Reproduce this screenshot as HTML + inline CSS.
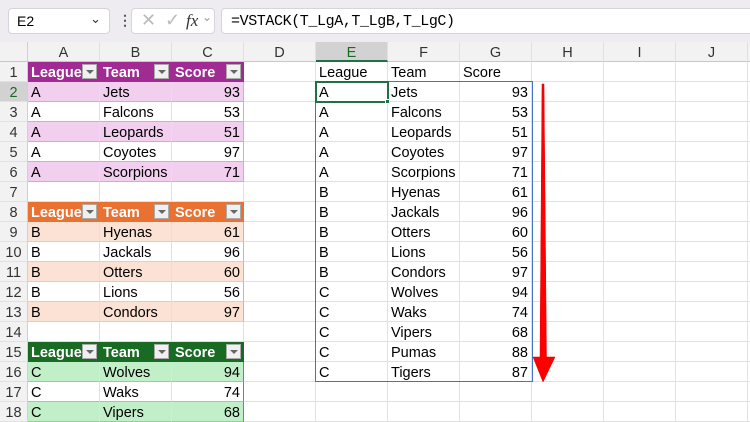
<!DOCTYPE html>
<html><head><style>
*{box-sizing:border-box;margin:0;padding:0}
body{width:750px;height:413px;overflow:hidden;background:#fff;font-family:"Liberation Sans",Arial,sans-serif;font-size:14.5px;color:#000;position:relative}
.top{position:absolute;left:0;top:0;width:750px;height:42px;background:#eeebf1}
.box{position:absolute;background:#fff;border:1px solid #d6d3da;border-radius:4px;top:8px;height:26px}
.r{display:flex;height:20px}
.c{width:72px;height:20px;border-right:1px solid #e1e1e1;border-bottom:1px solid #e1e1e1;padding-left:3px;padding-top:2px;line-height:19px;white-space:nowrap;overflow:hidden;position:relative;flex:none}
.h{width:28px;background:#f2f2f2;color:#333;text-align:center;border-right:1px solid #d0d0d0;padding-left:0}
.n{text-align:right;padding-right:3px}
.ch{background:#f2f2f2;text-align:center;color:#333;padding-left:0;border-bottom:1px solid #c8c8c8}
.pH{background:#a02b93;color:#fff;font-weight:bold;border-bottom-color:#a02b93;border-right-color:#a02b93}
.oH{background:#e97132;color:#fff;font-weight:bold;border-bottom-color:#e97132;border-right-color:#e97132}
.gH{background:#196b24;color:#fff;font-weight:bold;border-bottom-color:#196b24;border-right-color:#196b24}
.p{border-bottom-color:#e59edd}.p1{background:#f2ceef}
.o{border-bottom-color:#f7c7ac}.o1{background:#fbe2d5}
.g{border-bottom-color:#8ed973}.g1{background:#c1f0c8}
.pr{border-right-color:#e59edd}.or{border-right-color:#f1a983}.gr{border-right-color:#4ea72e}
.dd{position:absolute;right:2px;top:2px;width:15px;height:15px;background:#f0f0f0;border:1px solid #aaa}
.dd:after{content:"";position:absolute;left:3px;top:5px;border-left:4px solid transparent;border-right:4px solid transparent;border-top:4px solid #666}
</style></head><body>
<div class="top">
<div class="box" style="left:8px;width:102px"><span style="position:absolute;left:8px;top:4px;font-size:14px">E2</span><span style="position:absolute;right:8px;top:2px;font-size:13px;color:#333">&#8964;</span></div>
<div style="position:absolute;left:118px;top:12px;color:#555;font-size:14px;font-weight:bold">&#8942;</div>
<div class="box" style="left:131px;width:84px"><span style="position:absolute;left:9px;top:1px;color:#bbb;font-size:18px">&#10005;</span><span style="position:absolute;left:33px;top:1px;color:#bbb;font-size:18px">&#10003;</span><span style="position:absolute;left:54px;top:2px;font-family:'Liberation Serif',serif;font-style:italic;font-size:17px;color:#333">fx</span><span style="position:absolute;left:70px;top:1px;font-size:12px;color:#999">&#8964;</span></div>
<div class="box" style="left:221px;width:540px"><span style="position:absolute;left:9px;top:4px;font-family:'Liberation Mono',monospace;font-size:15px;letter-spacing:-0.4px">=VSTACK(T_LgA,T_LgB,T_LgC)</span></div>
</div>
<div style="position:absolute;left:0;top:42px;width:800px">
<div class="r"><div class="c h" style="border-bottom:1px solid #c8c8c8"></div><div class="c ch">A</div><div class="c ch">B</div><div class="c ch">C</div><div class="c ch">D</div><div class="c ch" style="background:#d2d2d2;color:#196b24;border-bottom:2px solid #1e7145">E</div><div class="c ch">F</div><div class="c ch">G</div><div class="c ch">H</div><div class="c ch">I</div><div class="c ch">J</div><div class="c ch"></div></div>
<div class="r"><div class="c h">1</div><div class="c pH">League<i class="dd"></i></div><div class="c pH">Team<i class="dd"></i></div><div class="c pH">Score<i class="dd"></i></div><div class="c"></div><div class="c">League</div><div class="c">Team</div><div class="c">Score</div><div class="c"></div><div class="c"></div><div class="c"></div><div class="c"></div></div>
<div class="r"><div class="c h" style="color:#196b24;background:#d2d2d2">2</div><div class="c p p1">A</div><div class="c p p1">Jets</div><div class="c p p1 n pr">93</div><div class="c"></div><div class="c">A</div><div class="c">Jets</div><div class="c n">93</div><div class="c"></div><div class="c"></div><div class="c"></div><div class="c"></div></div>
<div class="r"><div class="c h">3</div><div class="c p">A</div><div class="c p">Falcons</div><div class="c p n pr">53</div><div class="c"></div><div class="c">A</div><div class="c">Falcons</div><div class="c n">53</div><div class="c"></div><div class="c"></div><div class="c"></div><div class="c"></div></div>
<div class="r"><div class="c h">4</div><div class="c p p1">A</div><div class="c p p1">Leopards</div><div class="c p p1 n pr">51</div><div class="c"></div><div class="c">A</div><div class="c">Leopards</div><div class="c n">51</div><div class="c"></div><div class="c"></div><div class="c"></div><div class="c"></div></div>
<div class="r"><div class="c h">5</div><div class="c p">A</div><div class="c p">Coyotes</div><div class="c p n pr">97</div><div class="c"></div><div class="c">A</div><div class="c">Coyotes</div><div class="c n">97</div><div class="c"></div><div class="c"></div><div class="c"></div><div class="c"></div></div>
<div class="r"><div class="c h">6</div><div class="c p p1">A</div><div class="c p p1">Scorpions</div><div class="c p p1 n pr">71</div><div class="c"></div><div class="c">A</div><div class="c">Scorpions</div><div class="c n">71</div><div class="c"></div><div class="c"></div><div class="c"></div><div class="c"></div></div>
<div class="r"><div class="c h">7</div><div class="c"></div><div class="c"></div><div class="c"></div><div class="c"></div><div class="c">B</div><div class="c">Hyenas</div><div class="c n">61</div><div class="c"></div><div class="c"></div><div class="c"></div><div class="c"></div></div>
<div class="r"><div class="c h">8</div><div class="c oH">League<i class="dd"></i></div><div class="c oH">Team<i class="dd"></i></div><div class="c oH">Score<i class="dd"></i></div><div class="c"></div><div class="c">B</div><div class="c">Jackals</div><div class="c n">96</div><div class="c"></div><div class="c"></div><div class="c"></div><div class="c"></div></div>
<div class="r"><div class="c h">9</div><div class="c o o1">B</div><div class="c o o1">Hyenas</div><div class="c o o1 n or">61</div><div class="c"></div><div class="c">B</div><div class="c">Otters</div><div class="c n">60</div><div class="c"></div><div class="c"></div><div class="c"></div><div class="c"></div></div>
<div class="r"><div class="c h">10</div><div class="c o">B</div><div class="c o">Jackals</div><div class="c o n or">96</div><div class="c"></div><div class="c">B</div><div class="c">Lions</div><div class="c n">56</div><div class="c"></div><div class="c"></div><div class="c"></div><div class="c"></div></div>
<div class="r"><div class="c h">11</div><div class="c o o1">B</div><div class="c o o1">Otters</div><div class="c o o1 n or">60</div><div class="c"></div><div class="c">B</div><div class="c">Condors</div><div class="c n">97</div><div class="c"></div><div class="c"></div><div class="c"></div><div class="c"></div></div>
<div class="r"><div class="c h">12</div><div class="c o">B</div><div class="c o">Lions</div><div class="c o n or">56</div><div class="c"></div><div class="c">C</div><div class="c">Wolves</div><div class="c n">94</div><div class="c"></div><div class="c"></div><div class="c"></div><div class="c"></div></div>
<div class="r"><div class="c h">13</div><div class="c o o1">B</div><div class="c o o1">Condors</div><div class="c o o1 n or">97</div><div class="c"></div><div class="c">C</div><div class="c">Waks</div><div class="c n">74</div><div class="c"></div><div class="c"></div><div class="c"></div><div class="c"></div></div>
<div class="r"><div class="c h">14</div><div class="c"></div><div class="c"></div><div class="c"></div><div class="c"></div><div class="c">C</div><div class="c">Vipers</div><div class="c n">68</div><div class="c"></div><div class="c"></div><div class="c"></div><div class="c"></div></div>
<div class="r"><div class="c h">15</div><div class="c gH">League<i class="dd"></i></div><div class="c gH">Team<i class="dd"></i></div><div class="c gH">Score<i class="dd"></i></div><div class="c"></div><div class="c">C</div><div class="c">Pumas</div><div class="c n">88</div><div class="c"></div><div class="c"></div><div class="c"></div><div class="c"></div></div>
<div class="r"><div class="c h">16</div><div class="c g g1">C</div><div class="c g g1">Wolves</div><div class="c g g1 n gr">94</div><div class="c"></div><div class="c">C</div><div class="c">Tigers</div><div class="c n">87</div><div class="c"></div><div class="c"></div><div class="c"></div><div class="c"></div></div>
<div class="r"><div class="c h">17</div><div class="c g">C</div><div class="c g">Waks</div><div class="c g n gr">74</div><div class="c"></div><div class="c"></div><div class="c"></div><div class="c"></div><div class="c"></div><div class="c"></div><div class="c"></div><div class="c"></div></div>
<div class="r"><div class="c h">18</div><div class="c g g1">C</div><div class="c g g1">Vipers</div><div class="c g g1 n gr">68</div><div class="c"></div><div class="c"></div><div class="c"></div><div class="c"></div><div class="c"></div><div class="c"></div><div class="c"></div><div class="c"></div></div>
</div>
<div style="position:absolute;left:315px;top:81px;width:218px;height:301px;border:1px solid #4472c4"></div>
<div style="position:absolute;left:315px;top:81px;width:74px;height:22px;border:2px solid #1e7145"></div>
<div style="position:absolute;left:385px;top:99px;width:5px;height:5px;background:#1e7145;border:1px solid #fff"></div>
<svg style="position:absolute;left:528px;top:79px" width="32" height="308"><path d="M14 5 L16 5 L18.5 278 L27 278 L15 303 L5 278 L12 278 Z" fill="#ff0000" stroke="#e00000" stroke-width="0.5"/></svg>
</body></html>
